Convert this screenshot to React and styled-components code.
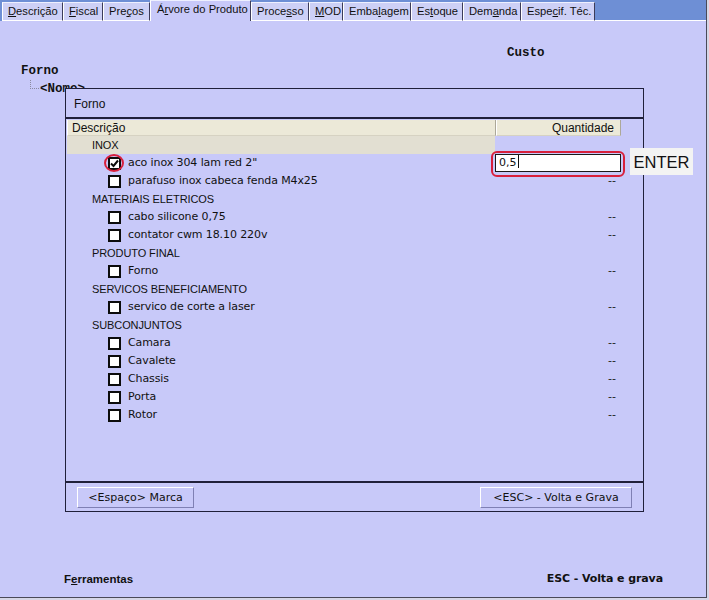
import React from 'react'
import styled, { createGlobalStyle, css } from 'styled-components'

const GlobalStyle = createGlobalStyle`
  html, body {
    margin: 0;
    padding: 0;
    background: #d6d6e6;
  }
`

const Window = styled.div`
  position: relative;
  width: 706px;
  height: 597px;
  display: flex;
  flex-direction: column;
  background: #c8c9f9;
  border-right: 1px solid #4a4a58;
  border-bottom: 1px solid #4a4a58;
  overflow: hidden;
`

const TabBar = styled.div`
  height: 21px;
  flex: none;
  display: flex;
  align-items: flex-end;
  padding-left: 2px;
  background: #6e8fd5;
`

const Tab = styled.div`
  box-sizing: border-box;
  width: ${p => p.w}px;
  height: 19px;
  padding-left: 5px;
  font: 11.2px/17px 'Liberation Sans', Arial, sans-serif;
  color: #111;
  white-space: nowrap;
  overflow: hidden;
  background: #cdd0f6;
  border-top: 1px solid #eef0ff;
  border-left: 1px solid #ffffff;
  border-right: 1px solid #3c3c5a;
  border-bottom: 1px solid #ffffff;
  ${p => p.active && css`
    height: 21px;
    padding-left: 6px;
    background: #c8c9f9;
    border-bottom: none;
    line-height: 17px;
  `}
  u { text-decoration: underline; }
`

const TabFill = styled.div`
  flex: 1;
  height: 1px;
  background: #ffffff;
`

const Page = styled.div`
  flex: 1;
  display: flex;
  flex-direction: column;
`

const MonoLabel = styled.div`
  font: bold 12.5px/14px 'Liberation Mono', 'Courier New', monospace;
  color: #111;
  padding-left: ${p => p.indent}px;
  margin-top: ${p => p.top}px;
`

const TreeChild = styled.div`
  display: flex;
  align-items: flex-start;
  margin-top: 4px;
  padding-left: 30px;
  font: bold 12.5px/14px 'Liberation Mono', 'Courier New', monospace;
  color: #111;
`

const Connector = styled.span`
  width: 8px;
  height: 8px;
  margin-top: -2px;
  margin-right: 1px;
  border-left: 1px dotted #8a8aa0;
  border-bottom: 1px dotted #8a8aa0;
`

const Footer = styled.div`
  margin-top: auto;
  margin-bottom: 11px;
  display: flex;
  justify-content: space-between;
  align-items: center;
  padding: 0 43px 0 64px;
`

const ToolsLabel = styled.span`
  font: bold 11.5px/14px 'Liberation Sans', Arial, sans-serif;
  color: #111;
  u { text-decoration: underline; }
`

const ExitLabel = styled.span`
  font: bold 11px/14px 'DejaVu Sans', Verdana, sans-serif;
  letter-spacing: -0.1px;
  color: #111;
`

const Dialog = styled.div`
  position: absolute;
  left: 65px;
  top: 88px;
  width: 577px;
  height: 422px;
  display: flex;
  flex-direction: column;
  background: #c8c9f9;
  border: 1px solid #20203a;
`

const DialogTitle = styled.div`
  height: 28px;
  flex: none;
  padding-left: 8px;
  font: 12px/30px 'Liberation Sans', Arial, sans-serif;
  color: #111;
`

const Rule = styled.div`
  height: 2px;
  flex: none;
  background: #20203a;
`

const List = styled.div`
  flex: 1;
  min-height: 0;
  padding: 1px 0 0 1px;
  display: flex;
  flex-direction: column;
`

const HeaderRow = styled.div`
  display: flex;
  height: 16px;
  flex: none;
`

const HeaderCell = styled.div`
  box-sizing: border-box;
  width: ${p => p.w}px;
  padding: 0 ${p => (p.right ? 6 : 4)}px;
  text-align: ${p => (p.right ? 'right' : 'left')};
  font: 12px/16px 'Liberation Sans', Arial, sans-serif;
  color: #111;
  background: #ece9d8;
  border-left: 1px solid #ffffff;
  border-right: 1px solid #aca899;
  border-bottom: 1px solid #d6d2c2;
`

const Row = styled.div`
  display: flex;
  height: 18px;
  flex: none;
  align-items: center;
`

const DescCell = styled.div`
  box-sizing: border-box;
  width: 428px;
  height: 100%;
  display: flex;
  align-items: center;
  padding-left: ${p => p.indent}px;
  background: ${p => (p.focused ? '#e2dfd2' : 'transparent')};
`

const QtyCell = styled.div`
  position: relative;
  box-sizing: border-box;
  width: 126px;
  height: 100%;
  display: flex;
  align-items: center;
  justify-content: flex-end;
  padding-right: 5px;
  font: 11px/18px 'DejaVu Sans', Verdana, sans-serif;
  color: #222;
`

const GroupText = styled.span`
  font: 11px/18px 'Liberation Sans', Arial, sans-serif;
  letter-spacing: -0.1px;
  color: #111;
`

const ItemText = styled.span`
  font: 11px/18px 'DejaVu Sans', Verdana, sans-serif;
  letter-spacing: -0.1px;
  color: #111;
`

const Check = styled.span`
  position: relative;
  box-sizing: border-box;
  width: 13px;
  height: 13px;
  flex: none;
  margin-right: 7px;
  background: #ffffff;
  border: 2px solid #0c0c0c;
  display: flex;
  align-items: center;
  justify-content: center;
  ${p => p.marked && css`
    &::after {
      content: '';
      position: absolute;
      inset: -5px -5px -4px -6px;
      border: 2px solid #d8203c;
      border-radius: 50%;
    }
  `}
`

const QtyInput = styled.div`
  position: relative;
  box-sizing: border-box;
  width: 126px;
  height: 18px;
  margin-right: -5px;
  background: #ffffff;
  border: 1px solid #1a1a1a;
  padding-left: 3px;
  font: 11px/16px 'DejaVu Sans', Verdana, sans-serif;
  color: #111;
  &::after {
    content: '';
    position: absolute;
    inset: -4px -5px -6px -5px;
    border: 2px solid #d8203c;
    border-radius: 6px;
  }
`

const Caret = styled.span`
  display: inline-block;
  width: 1px;
  height: 13px;
  margin-left: 1px;
  vertical-align: -2px;
  background: #111;
`

const ButtonBar = styled.div`
  box-sizing: border-box;
  height: 28px;
  flex: none;
  display: flex;
  align-items: flex-start;
  justify-content: space-between;
  padding: 4px 11px 0 11px;
`

const Button = styled.div`
  box-sizing: border-box;
  width: ${p => p.w}px;
  height: 21px;
  display: flex;
  align-items: center;
  justify-content: center;
  font: 11px/18px 'DejaVu Sans', Verdana, sans-serif;
  color: #111;
  background: #c8c9f9;
  border-top: 1px solid #ffffff;
  border-left: 1px solid #ffffff;
  border-right: 1px solid #7f80b4;
  border-bottom: 1px solid #7f80b4;
`

const EnterTag = styled.div`
  position: absolute;
  left: 630px;
  top: 148px;
  width: 63px;
  height: 27px;
  display: flex;
  align-items: center;
  justify-content: center;
  background: #f3f3f3;
  font: 16.5px/20px 'Liberation Sans', Arial, sans-serif;
  color: #111;
`

const tabs = [
  { w: 61, label: <><u>D</u>escrição</> },
  { w: 40, label: <><u>F</u>iscal</> },
  { w: 47, label: <>Pre<u>ç</u>os</> },
  { w: 101, label: <>Á<u>r</u>vore do Produto</>, active: true },
  { w: 58, label: <>Proce<u>s</u>so</> },
  { w: 34, label: <><u>M</u>OD</> },
  { w: 68, label: <>Emba<u>l</u>agem</> },
  { w: 52, label: <>Es<u>t</u>oque</> },
  { w: 58, label: <>Dem<u>a</u>nda</> },
  { w: 74, label: <>Espe<u>c</u>if. Téc.</> },
]

const rows = [
  { group: 'INOX', focused: true },
  { item: 'aco inox 304 lam red 2"', checked: true, editing: true },
  { item: 'parafuso inox cabeca fenda M4x25' },
  { group: 'MATERIAIS ELETRICOS' },
  { item: 'cabo silicone 0,75' },
  { item: 'contator cwm 18.10 220v' },
  { group: 'PRODUTO FINAL' },
  { item: 'Forno' },
  { group: 'SERVICOS BENEFICIAMENTO' },
  { item: 'servico de corte a laser' },
  { group: 'SUBCONJUNTOS' },
  { item: 'Camara' },
  { item: 'Cavalete' },
  { item: 'Chassis' },
  { item: 'Porta' },
  { item: 'Rotor' },
]

function CheckMark() {
  return (
    <svg width="9" height="9" viewBox="0 0 9 9">
      <path d="M1 4.5 L3.5 7 L8 1.5" fill="none" stroke="#0c0c0c" strokeWidth="2" />
    </svg>
  )
}

export default function App() {
  return (
    <>
      <GlobalStyle />
      <Window>
        <TabBar>
          {tabs.map((t, i) => (
            <Tab key={i} w={t.w} active={t.active}>{t.label}</Tab>
          ))}
          <TabFill />
        </TabBar>
        <Page>
          <MonoLabel indent={507} top={25}>Custo</MonoLabel>
          <MonoLabel indent={21} top={4}>Forno</MonoLabel>
          <TreeChild>
            <Connector />
            &lt;Nome&gt;
          </TreeChild>
          <Footer>
            <ToolsLabel>F<u>e</u>rramentas</ToolsLabel>
            <ExitLabel>ESC - Volta e grava</ExitLabel>
          </Footer>
        </Page>

        <Dialog>
          <DialogTitle>Forno</DialogTitle>
          <Rule />
          <List>
            <HeaderRow>
              <HeaderCell w={429}>Descrição</HeaderCell>
              <HeaderCell w={125} right>Quantidade</HeaderCell>
            </HeaderRow>
            {rows.map((r, i) =>
              r.group ? (
                <Row key={i}>
                  <DescCell indent={25} focused={r.focused}>
                    <GroupText>{r.group}</GroupText>
                  </DescCell>
                </Row>
              ) : (
                <Row key={i}>
                  <DescCell indent={41}>
                    <Check marked={r.checked}>{r.checked && <CheckMark />}</Check>
                    <ItemText>{r.item}</ItemText>
                  </DescCell>
                  <QtyCell>
                    {r.editing ? (
                      <QtyInput>0,5<Caret /></QtyInput>
                    ) : (
                      '--'
                    )}
                  </QtyCell>
                </Row>
              )
            )}
          </List>
          <Rule />
          <ButtonBar>
            <Button w={117}>&lt;Espaço&gt; Marca</Button>
            <Button w={152}>&lt;ESC&gt; - Volta e Grava</Button>
          </ButtonBar>
        </Dialog>

        <EnterTag>ENTER</EnterTag>
      </Window>
    </>
  )
}
